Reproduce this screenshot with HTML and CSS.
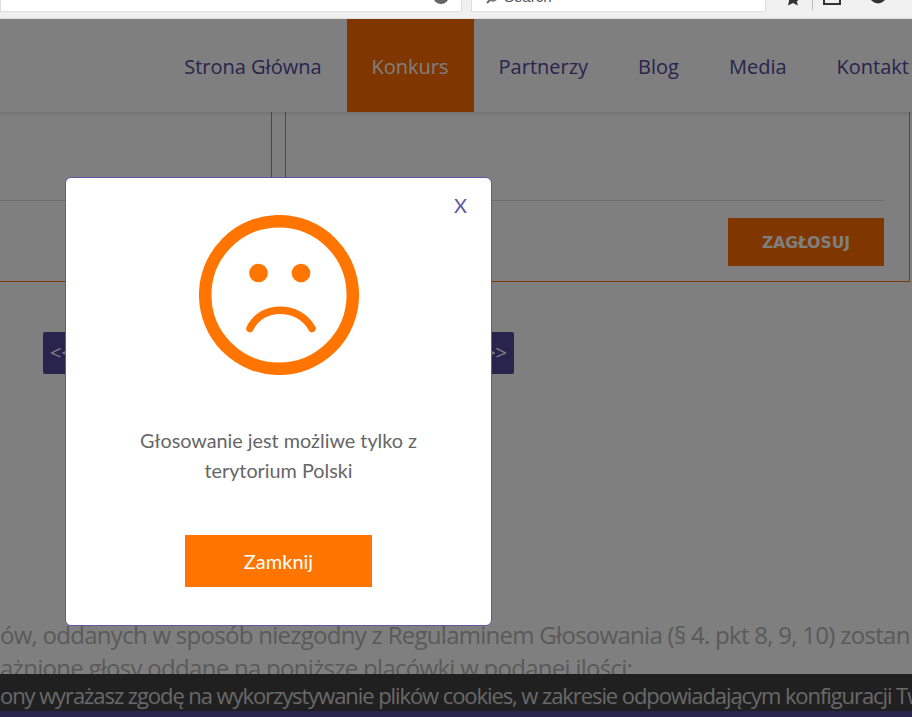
FILE: index.html
```html
<!DOCTYPE html>
<html lang="pl">
<head>
<meta charset="utf-8">
<title>Konkurs</title>
<link rel="stylesheet" href="styles.css">
</head>
<body>
<div class="chrome">
  <div class="field field-url"><span class="reload"></span></div>
  <div class="field field-search">
    <svg class="glass" width="12" height="6" viewBox="0 0 12 6"><path d="M2 3l3-3" fill="none" stroke="#666" stroke-width="2"/><circle cx="8" cy="-3" r="4" fill="none" stroke="#666" stroke-width="1.500"/></svg>
    <span class="search-text">Search</span>
  </div>
  <div class="tools">
    <svg class="tool-star" width="16" height="6" viewBox="0 0 16 6"><path d="M8-8l2.300 5 5.700.6-4.200 3.800L13 5.600 8 3 3 5.600l1.200-5.200L0-3.400l5.700-.6z" fill="#333"/></svg>
    <span class="tool-sep"></span>
    <svg class="tool-box" width="18" height="6" viewBox="0 0 18 6"><path d="M1-6h16v10H1z" fill="none" stroke="#333" stroke-width="2"/></svg>
    <svg class="tool-user" width="18" height="6" viewBox="0 0 18 6"><circle cx="9" cy="-5" r="8.500" fill="#333"/></svg>
  </div>
</div>
<header class="nav">
  <a class="nav-item">Strona Główna</a>
  <a class="nav-item nav-active">Konkurs</a>
  <a class="nav-item">Partnerzy</a>
  <a class="nav-item">Blog</a>
  <a class="nav-item">Media</a>
  <a class="nav-item">Kontakt</a>
</header>
<main class="page">
  <div class="cards">
    <div class="card card-left"><div class="card-rule"></div></div>
    <div class="card card-right">
      <div class="card-rule"></div>
      <div class="vote-row"><span class="vote">ZAGŁOSUJ</span></div>
    </div>
  </div>
  <div class="pager">
    <span class="pager-btn">&lt;&lt;</span>
    <span class="pager-btn">&gt;&gt;</span>
  </div>
  <div class="rules">
    <p>ów, oddanych w sposób niezgodny z Regulaminem Głosowania (§ 4. pkt 8, 9, 10) zostan</p>
    <p>ażnione głosy oddane na poniższe placówki w podanej ilości:</p>
  </div>
</main>
<div class="cookies">ony wyrażasz zgodę na wykorzystywanie plików cookies, w zakresie odpowiadającym konfiguracji Tw</div>
<div class="footer-strip"></div>
<div class="overlay"></div>
<div class="modal">
  <span class="close">X</span>
  <svg class="sad" width="160" height="160" viewBox="0 0 160 160">
    <circle cx="80" cy="80" r="73.800" fill="none" stroke="#ff7500" stroke-width="12.500"/>
    <circle cx="59.500" cy="58" r="9.300" fill="#ff7500"/>
    <circle cx="102" cy="58" r="9.300" fill="#ff7500"/>
    <path d="M51 113.500C62 89 100 89 113 113.500" fill="none" stroke="#ff7500" stroke-width="7.500" stroke-linecap="round"/>
  </svg>
  <p class="message">Głosowanie jest możliwe tylko z<br>terytorium Polski</p>
  <span class="close-btn">Zamknij</span>
</div>
</body>
</html>
```
FILE: styles.css
```css
* { box-sizing: border-box; }
html, body { margin: 0; height: 100%; }
body {
  position: relative;
  width: 912px;
  height: 717px;
  overflow: hidden;
  background: #fff;
  font-family: "Open Sans", sans-serif;
}
.chrome {
  height: 19px;
  display: flex;
  align-items: flex-start;
  background: #f0f0f0;
  border-bottom: 1px solid #e4e4e4;
}
.field {
  height: 12px;
  background: #fff;
  border: 1px solid #dedede;
  border-top: 0;
  position: relative;
  overflow: hidden;
}
.field-url { width: 462px; }
.reload {
  position: absolute;
  left: 432px;
  top: -12px;
  width: 16px;
  height: 16px;
  border-radius: 50%;
  background: #666;
}
.field-search { width: 295px; margin-left: 9px; padding-left: 32px; }
.glass { position: absolute; left: 13px; top: 0; }
.search-text {
  display: block;
  font: 15px/15px "Liberation Sans", sans-serif;
  color: #555;
  margin-top: -11px;
}
.tools { display: flex; align-items: flex-start; margin-left: 19px; }
.tool-sep { width: 1px; height: 10px; background: #bbb; margin-left: 11px; }
.tool-box { margin-left: 10px; }
.tool-user { margin-left: 28px; }
.nav {
  height: 93px;
  display: flex;
  justify-content: flex-end;
  background: #fff;
  box-shadow: 0 2px 4px rgba(0,0,0,.12);
  position: relative;
  white-space: nowrap;
  overflow: hidden;
}
.nav-item {
  padding: 0 25px;
  line-height: 96px;
  font-size: 20px;
  color: #51489c;
}
.nav-item:last-child { padding-right: 3px; }
.nav-active { background: #ff6c00; color: #fff; }
.page { height: 562px; position: relative; overflow: hidden; }
.cards {
  display: flex;
  height: 170px;
  gap: 13px;
  margin-left: -20px;
  width: 930px;
}
.card {
  border: 1px solid #ff7500;
  border-top: 0;
  position: relative;
}
.card-left { width: 292px; }
.card-right { width: 625px; padding: 88px 25px 0 0; }
.card-rule { height: 1px; background: #d8d8d8; }
.card-left .card-rule { margin-top: 88px; }
.vote-row { display: flex; justify-content: flex-end; margin-top: 17px; }
.vote {
  width: 156px;
  height: 48px;
  background: #ff6c00;
  color: #fff;
  text-align: center;
  font: bold 15.500px/50px "DejaVu Sans", sans-serif;
}
.pager {
  display: flex;
  justify-content: space-between;
  width: 471px;
  margin: 50px 0 0 43px;
}
.pager-btn {
  width: 44px;
  height: 42px;
  background: #51489c;
  color: #fff;
  border-radius: 2px;
  padding: 0 7px;
  font: 20px/42px "Open Sans", sans-serif;
}
.pager-btn:last-child { text-align: right; }
.rules {
  margin-top: 244px;
  font-size: 24px;
  line-height: 33px;
  color: #b4b4b4;
  white-space: nowrap;
  letter-spacing: -.72px;
}
.rules p { margin: 0; }
.cookies {
  position: absolute;
  left: 0;
  right: 0;
  top: 674px;
  height: 37px;
  padding-top: 7px;
  background: #414141;
  color: #d0d0d0;
  font-size: 22px;
  line-height: 28px;
  white-space: nowrap;
  letter-spacing: -1.080px;
  overflow: hidden;
}
.footer-strip {
  position: absolute;
  left: 0;
  right: 0;
  top: 711px;
  height: 6px;
  background: #51489c;
}
.overlay {
  position: absolute;
  left: 0;
  right: 0;
  top: 19px;
  bottom: 0;
  background: rgba(0,0,0,.5);
}
.modal {
  position: absolute;
  left: 65px;
  top: 177px;
  width: 427px;
  height: 449px;
  background: #fff;
  border: 1px solid #5f57a6;
  border-radius: 6px;
  display: flex;
  flex-direction: column;
  align-items: center;
  padding-top: 37px;
}
.close {
  position: absolute;
  right: 24px;
  top: 15px;
  font: 20px/24px "Lato", sans-serif;
  color: #5f57a6;
}
.sad { display: block; margin-left: 1px; }
.message {
  margin: 50px 0 0;
  font: 19.800px/30px "Lato", sans-serif;
  color: #666;
  text-align: center;
}
.close-btn {
  margin-top: 50px;
  width: 187px;
  height: 52px;
  background: #ff7500;
  color: #fff;
  text-align: center;
  font: 400 20px/52px "Lato", sans-serif;
}
```
